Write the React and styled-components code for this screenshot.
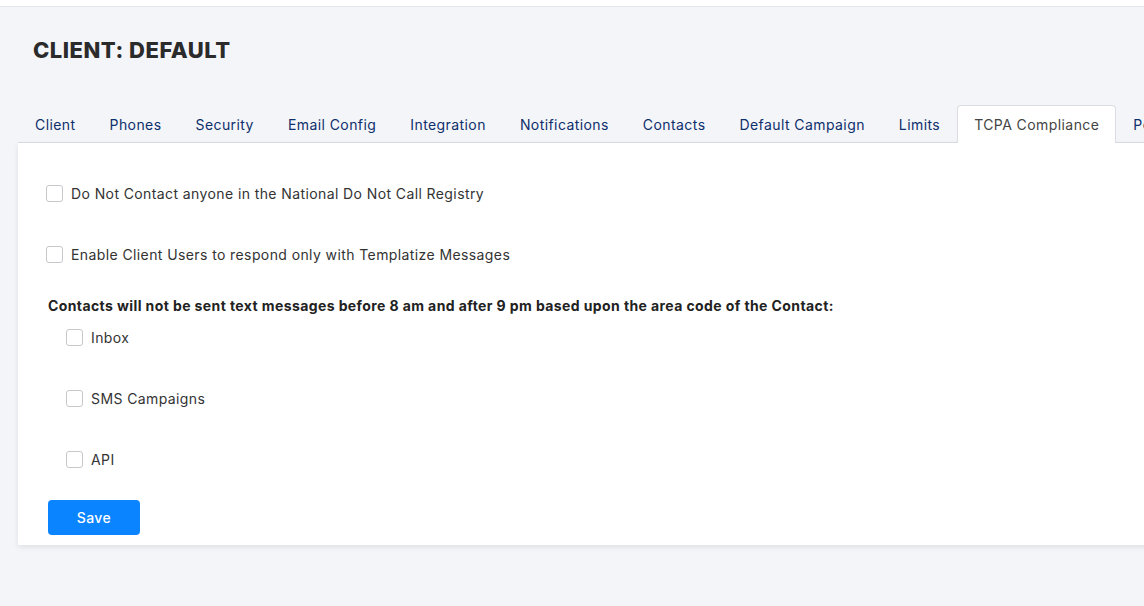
import React from "react"
import styled, { createGlobalStyle } from "styled-components"

const GlobalStyle = createGlobalStyle`
  html, body {
    margin: 0;
    padding: 0;
    background: #f4f5f9;
    overflow: hidden;
  }
  body {
    font-family: "Inter", "Noto Sans", sans-serif;
    letter-spacing: 0.4px;
    color: #333;
  }
`

const tabs = [
  "Client",
  "Phones",
  "Security",
  "Email Config",
  "Integration",
  "Notifications",
  "Contacts",
  "Default Campaign",
  "Limits",
  "TCPA Compliance",
  "Permissions",
]

const Page = styled.div`
  width: 1300px;
  min-height: 606px;
`

const TopStrip = styled.div`
  height: 6px;
  background: #fff;
  border-bottom: 1px solid #e6e7eb;
`

const Title = styled.h1`
  margin: 0;
  padding: 30px 0 0 33px;
  height: 40px;
  font-size: 22px;
  font-weight: 800;
  letter-spacing: 0.5px;
  color: #2b2b2b;
`

const TabBar = styled.div`
  display: flex;
  margin: 28px 0 0 18px;
  border-bottom: 1px solid #dcdde2;
`

const Tab = styled.div`
  padding: 10px 16px 9px;
  font-size: 14px;
  line-height: 18px;
  letter-spacing: 0.42px;
  border: 1px solid ${p => (p.$active ? "#dcdde2" : "transparent")};
  border-bottom: none;
  border-radius: 4px 4px 0 0;
  margin-bottom: -1px;
  background: ${p => (p.$active ? "#fff" : "transparent")};
  color: ${p => (p.$active ? "#444" : "#0d2f6b")};
  white-space: nowrap;
`

const Card = styled.div`
  margin-left: 18px;
  background: #fff;
  box-shadow: 0 2px 6px rgba(0, 0, 0, 0.09);
  padding: 41px 30px 10px 28px;
`

const CheckRow = styled.label`
  display: flex;
  align-items: center;
  gap: 8px;
  height: 18px;
  margin-left: ${p => (p.$indent ? "20px" : "0")};
  margin-bottom: ${p => (p.$gap ?? 43)}px;
  font-size: 14px;
  color: #333;
`

const Box = styled.span`
  width: 17px;
  height: 17px;
  box-sizing: border-box;
  border: 1px solid #c8c8cc;
  border-radius: 3px;
  background: #fff;
  flex: none;
`

const Heading = styled.div`
  margin: 0 0 14px 2px;
  font-size: 14px;
  font-weight: 700;
  color: #222;
`

const SaveButton = styled.button`
  margin: 0 0 0 2px;
  width: 92px;
  height: 35px;
  border: none;
  border-radius: 4px;
  background: #0a84ff;
  color: #fff;
  font-family: inherit;
  letter-spacing: 0.4px;
  font-size: 14px;
  font-weight: 500;
`

const Check = ({ children, indent, gap }) => (
  <CheckRow $indent={indent} $gap={gap}>
    <Box />
    {children}
  </CheckRow>
)

export default function App() {
  return (
    <Page>
      <GlobalStyle />
      <TopStrip />
      <Title>CLIENT: DEFAULT</Title>
      <TabBar>
        {tabs.map(t => (
          <Tab key={t} $active={t === "TCPA Compliance"}>{t}</Tab>
        ))}
      </TabBar>
      <Card>
        <Check>Do Not Contact anyone in the National Do Not Call Registry</Check>
        <Check gap={34}>Enable Client Users to respond only with Templatize Messages</Check>
        <Heading>
          Contacts will not be sent text messages before 8 am and after 9 pm based upon the area code of the Contact:
        </Heading>
        <Check indent>Inbox</Check>
        <Check indent>SMS Campaigns</Check>
        <Check indent gap={32}>API</Check>
        <SaveButton>Save</SaveButton>
      </Card>
    </Page>
  )
}
